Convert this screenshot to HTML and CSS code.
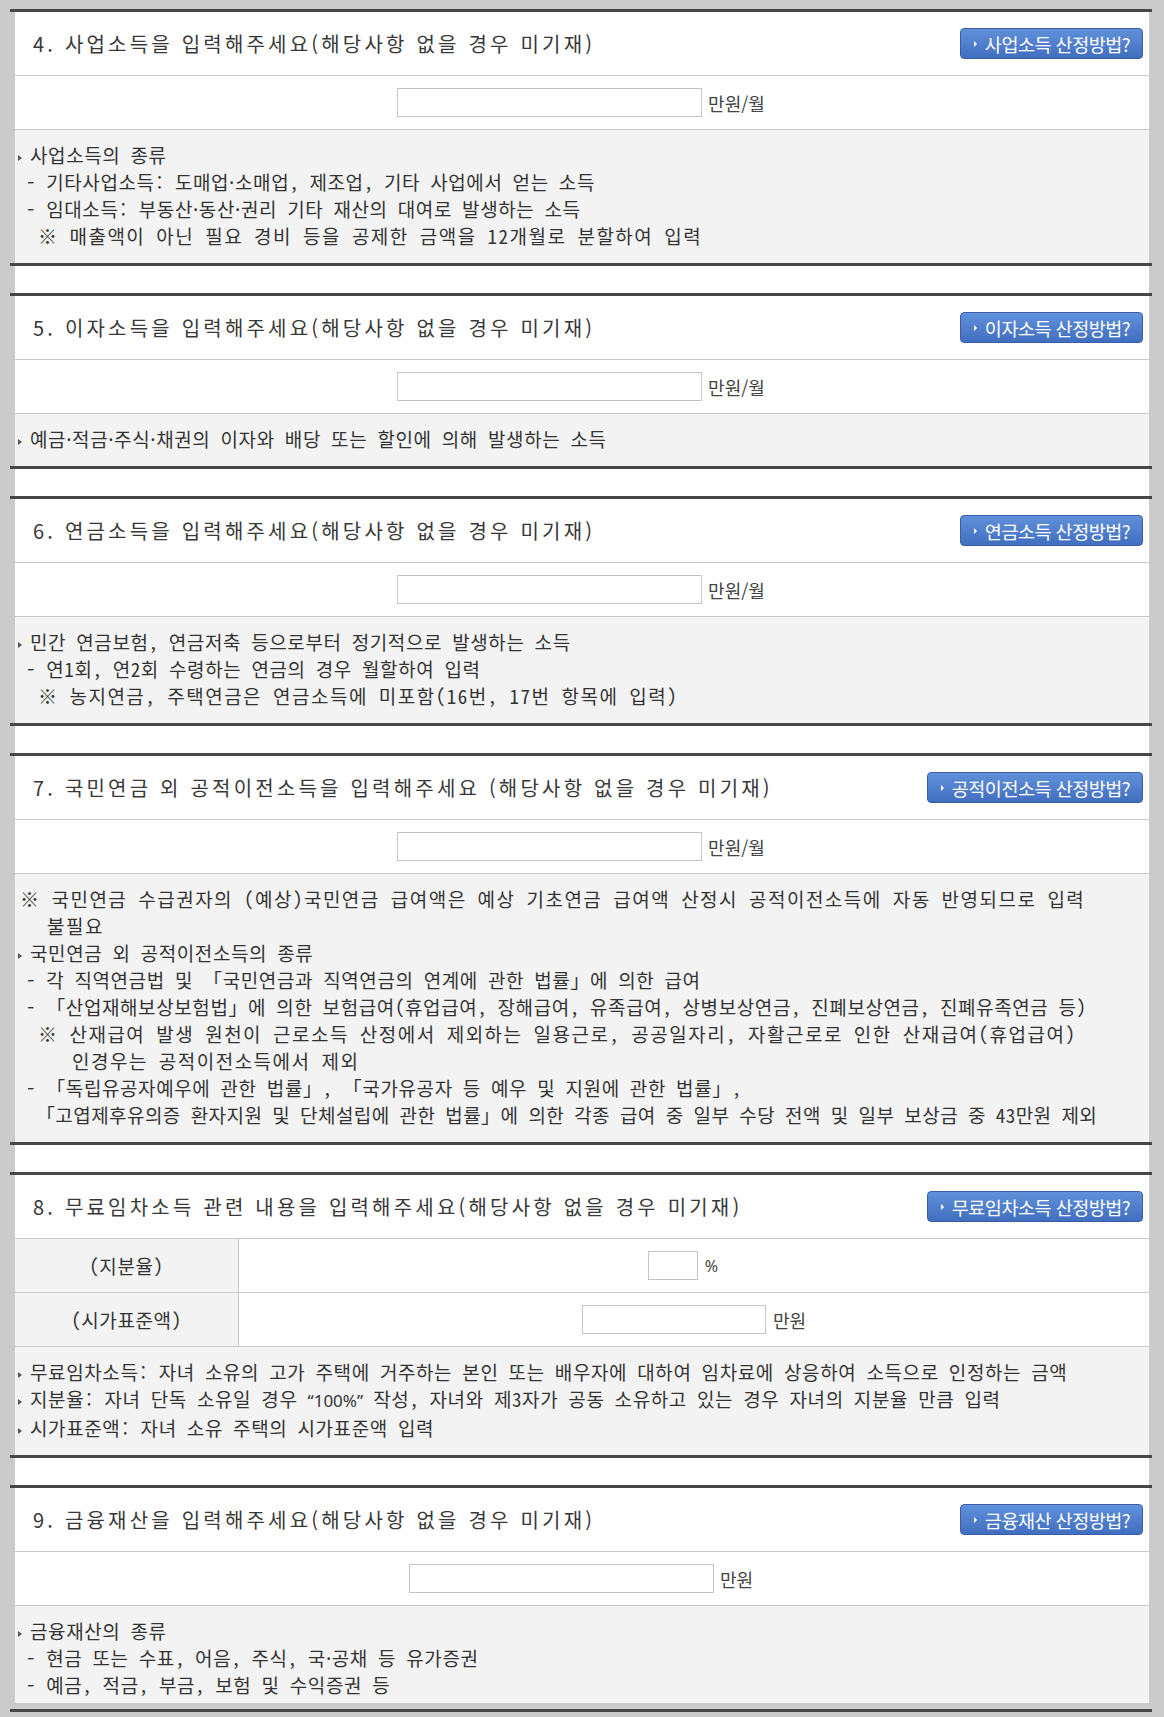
FILE: index.html
```html
<!DOCTYPE html>
<html lang="ko">
<head>
    <meta charset="UTF-8">
    <meta name="viewport" content="width=device-width, initial-scale=1.0">
    <title>소득·재산 입력</title>
    <link rel="stylesheet" href="styles.css">
</head>
<body>
    <div class="page">
        <!-- 4. 사업소득 -->
        <div class="section">
            <div class="title-row">
                <h3 class="title">4. 사업소득을 입력해주세요(해당사항 없을 경우 미기재)</h3>
                <a class="calc-btn" href="#">사업소득 산정방법?</a>
            </div>
            <div class="input-row">
                <input type="text" class="amount">
                <span class="unit">만원/월</span>
            </div>
            <div class="notes">
                <div class="tri">사업소득의 종류</div>
                <div class="dash">- 기타사업소득: 도매업·소매업, 제조업, 기타 사업에서 얻는 소득</div>
                <div class="dash">- 임대소득: 부동산·동산·권리 기타 재산의 대여로 발생하는 소득</div>
                <div class="ref">※ 매출액이 아닌 필요 경비 등을 공제한 금액을 12개월로 분할하여 입력</div>
            </div>
        </div>

        <!-- 5. 이자소득 -->
        <div class="section">
            <div class="title-row">
                <h3 class="title">5. 이자소득을 입력해주세요(해당사항 없을 경우 미기재)</h3>
                <a class="calc-btn" href="#">이자소득 산정방법?</a>
            </div>
            <div class="input-row">
                <input type="text" class="amount">
                <span class="unit">만원/월</span>
            </div>
            <div class="notes">
                <div class="tri">예금·적금·주식·채권의 이자와 배당 또는 할인에 의해 발생하는 소득</div>
            </div>
        </div>

        <!-- 6. 연금소득 -->
        <div class="section">
            <div class="title-row">
                <h3 class="title">6. 연금소득을 입력해주세요(해당사항 없을 경우 미기재)</h3>
                <a class="calc-btn" href="#">연금소득 산정방법?</a>
            </div>
            <div class="input-row">
                <input type="text" class="amount">
                <span class="unit">만원/월</span>
            </div>
            <div class="notes">
                <div class="tri">민간 연금보험, 연금저축 등으로부터 정기적으로 발생하는 소득</div>
                <div class="dash">- 연1회, 연2회 수령하는 연금의 경우 월할하여 입력</div>
                <div class="ref">※ 농지연금, 주택연금은 연금소득에 미포함(16번, 17번 항목에 입력)</div>
            </div>
        </div>

        <!-- 7. 공적이전소득 -->
        <div class="section">
            <div class="title-row">
                <h3 class="title">7. 국민연금 외 공적이전소득을 입력해주세요 (해당사항 없을 경우 미기재)</h3>
                <a class="calc-btn" href="#">공적이전소득 산정방법?</a>
            </div>
            <div class="input-row">
                <input type="text" class="amount">
                <span class="unit">만원/월</span>
            </div>
            <div class="notes">
                <div class="ref ref-top">
                    ※ 국민연금 수급권자의 (예상)국민연금 급여액은 예상 기초연금 급여액 산정시 공적이전소득에 자동 반영되므로 입력
                    <span class="cont">불필요</span>
                </div>
                <div class="tri">국민연금 외 공적이전소득의 종류</div>
                <div class="dash">- 각 직역연금법 및 「국민연금과 직역연금의 연계에 관한 법률」에 의한 급여</div>
                <div class="dash">- 「산업재해보상보험법」에 의한 보험급여(휴업급여, 장해급여, 유족급여, 상병보상연금, 진폐보상연금, 진폐유족연금 등)</div>
                <div class="ref">
                    ※ 산재급여 발생 원천이 근로소득 산정에서 제외하는 일용근로, 공공일자리, 자활근로로 인한 산재급여(휴업급여)
                    <span class="cont-deep">인경우는 공적이전소득에서 제외</span>
                </div>
                <div class="dash">- 「독립유공자예우에 관한 법률」, 「국가유공자 등 예우 및 지원에 관한 법률」,<br><span class="tight">&nbsp;「고엽제후유의증 환자지원 및 단체설립에 관한 법률」에 의한 각종 급여 중 일부 수당 전액 및 일부 보상금 중 43만원 제외</span></div>
            </div>
        </div>

        <!-- 8. 무료임차소득 -->
        <div class="section">
            <div class="title-row">
                <h3 class="title">8. 무료임차소득 관련 내용을 입력해주세요(해당사항 없을 경우 미기재)</h3>
                <a class="calc-btn" href="#">무료임차소득 산정방법?</a>
            </div>
            <div class="field-row">
                <div class="field-label">(지분율)</div>
                <div class="field-value">
                    <input type="text" class="ratio">
                    <span class="unit unit-pct">%</span>
                </div>
            </div>
            <div class="field-row">
                <div class="field-label">(시가표준액)</div>
                <div class="field-value">
                    <input type="text" class="price">
                    <span class="unit">만원</span>
                </div>
            </div>
            <div class="notes">
                <div class="tri">무료임차소득: 자녀 소유의 고가 주택에 거주하는 본인 또는 배우자에 대하여 임차료에 상응하여 소득으로 인정하는 금액</div>
                <div class="tri">지분율: 자녀 단독 소유일 경우 <span class="lat">“100%”</span> 작성, 자녀와 제3자가 공동 소유하고 있는 경우 자녀의 지분율 만큼 입력</div>
                <div class="tri">시가표준액: 자녀 소유 주택의 시가표준액 입력</div>
            </div>
        </div>

        <!-- 9. 금융재산 -->
        <div class="section last">
            <div class="title-row">
                <h3 class="title">9. 금융재산을 입력해주세요(해당사항 없을 경우 미기재)</h3>
                <a class="calc-btn" href="#">금융재산 산정방법?</a>
            </div>
            <div class="input-row">
                <input type="text" class="amount">
                <span class="unit">만원</span>
            </div>
            <div class="notes">
                <div class="tri">금융재산의 종류</div>
                <div class="dash">- 현금 또는 수표, 어음, 주식, 국·공채 등 유가증권</div>
                <div class="dash">- 예금, 적금, 부금, 보험 및 수익증권 등</div>
            </div>
        </div>
    </div>
    <div class="page-end"></div>
</body>
</html>
```

FILE: styles.css
```css
body {
    margin: 0;
    background-color: #cbcbcb;
    font-family: "Noto Sans Mono CJK KR", "Noto Sans CJK KR", sans-serif;
    color: #333;
}
.page {
    width: 1134px;
    margin: 9px 0 0 15px;
    background: #fff;
}
.section {
    margin: 0 -3px 0 -5px;
    border-top: 3px solid #474747;
    border-bottom: 3px solid #474747;
}
.section + .section {
    margin-top: 27px;
}
.section.last {
    border-bottom: none;
}
.page-end {
    width: 1142px;
    margin: 6px 0 0 10px;
    border-top: 3px solid #474747;
}
.title-row {
    height: 63px;
    display: flex;
    align-items: center;
    justify-content: space-between;
    padding: 0 9px 0 23px;
    border-bottom: 1px solid #c9c9c9;
}
.title {
    margin: 0;
    font-family: "Noto Sans CJK KR", sans-serif;
    font-size: 20px;
    font-weight: normal;
    letter-spacing: 3.2px;
    color: #383838;
}
.calc-btn {
    display: inline-flex;
    align-items: center;
    box-sizing: border-box;
    height: 31px;
    padding: 0 12px 0 13px;
    border: 1px solid #3a5ea6;
    border-radius: 4px;
    background: linear-gradient(#6190da, #416fc0);
    color: #fff;
    font-family: "Noto Sans CJK KR", sans-serif;
    font-size: 18.5px;
    letter-spacing: -0.5px;
    text-decoration: none;
}
.calc-btn::before {
    content: "";
    display: inline-block;
    border-left: 3px solid #fff;
    border-top: 3px solid transparent;
    border-bottom: 3px solid transparent;
    margin-right: 8px;
}
.input-row {
    height: 53px;
    display: flex;
    align-items: center;
    justify-content: center;
    gap: 6px;
    border-bottom: 1px solid #c9c9c9;
}
input {
    box-sizing: border-box;
    height: 29px;
    margin: 0;
    border: 1px solid #c4c4c4;
    background: #fff;
}
.amount {
    width: 305px;
}
.ratio {
    width: 50px;
}
.price {
    width: 184px;
}
.unit {
    font-family: "Noto Sans CJK KR", sans-serif;
    font-size: 18px;
    color: #444;
}
.unit-pct {
    font-family: "Noto Sans", sans-serif;
    font-size: 16px;
    margin-right: 22px;
}
.field-row {
    display: grid;
    grid-template-columns: 224px 1fr;
    height: 53px;
    padding: 0 3px 0 5px;
    border-bottom: 1px solid #c9c9c9;
}
.field-label {
    display: flex;
    align-items: center;
    justify-content: center;
    background: #f3f3f3;
    border-right: 1px solid #c9c9c9;
    font-size: 19px;
    letter-spacing: 0.6px;
}
.field-value {
    display: flex;
    align-items: center;
    justify-content: center;
    gap: 7px;
}
.notes {
    margin: 0 3px 0 5px;
    padding: 11px 0 14px;
    background: #f3f3f3;
    font-size: 19px;
    letter-spacing: 0.6px;
    line-height: 27px;
    white-space: nowrap;
}
.section.last .notes {
    padding-bottom: 5px;
}
.tri::before {
    content: "";
    display: inline-block;
    vertical-align: 2px;
    border-left: 4px solid #555;
    border-top: 3.5px solid transparent;
    border-bottom: 3.5px solid transparent;
    margin: 0 8px 0 3px;
}
.dash {
    padding-left: 11px;
}
.ref {
    padding-left: 23px;
    letter-spacing: 1.48px;
}
.ref-top {
    padding-left: 5px;
}
.cont {
    display: block;
    padding-left: 27px;
}
.cont-deep {
    display: block;
    padding-left: 34px;
}
.tight {
    letter-spacing: 0.43px;
}
.lat {
    font-family: "Noto Sans", sans-serif;
    font-size: 17px;
    letter-spacing: 0;
}
```
